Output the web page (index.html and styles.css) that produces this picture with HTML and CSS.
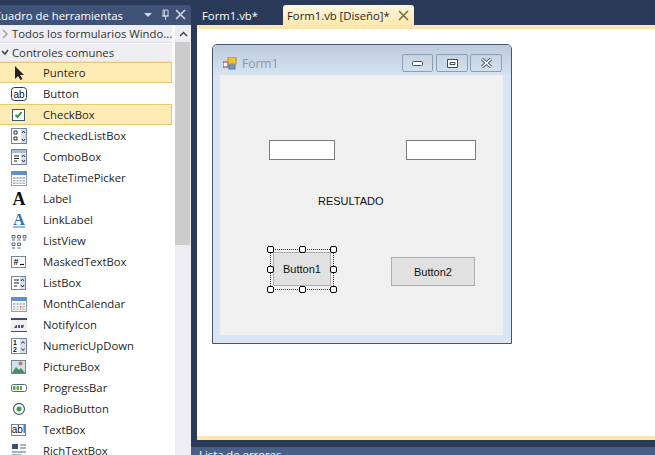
FILE: index.html
```html
<!DOCTYPE html>
<html lang="es">
<head>
<meta charset="utf-8">
<title>Form1.vb [Diseño]</title>
<link rel="stylesheet" href="styles.css">
</head>
<body>
<div class="app">
  <aside class="toolbox">
    <header class="panel-title">
      <span class="panel-name">Cuadro de herramientas</span>
      <span class="panel-tools">
        <svg width="42" height="14" viewBox="0 0 42 14"><path d="M0 5h8l-4 4z" fill="#cfd6e2"/><path d="M19 2h5v6h-5zM18 8h7M21.500 8v4M20.500 2v6" fill="none" stroke="#cfd6e2"/><path d="M32 2l9 9M41 2l-9 9" stroke="#cfd6e2" stroke-width="1.600"/></svg>
      </span>
    </header>
    <div class="panel-body">
      <div class="list">
        <div class="group group-first"><svg class="chev" width="8" height="10" viewBox="0 0 8 10"><path d="M2 1l4 4-4 4" fill="none" stroke="#a5a5a5" stroke-width="1.600"/></svg><span>Todos los formularios Windo...</span></div>
        <div class="group"><svg class="chev" width="8" height="10" viewBox="0 0 8 10"><path d="M1 3l3 3 3-4" fill="none" stroke="#444" stroke-width="1.600"/></svg><span>Controles comunes</span></div>

        <div class="item sel"><svg width="16" height="16" viewBox="0 0 16 16"><path d="M4 1v13l3-3 2.500 4 2-1-2.500-4h4z" fill="#222"/></svg><span>Puntero</span></div>
        <div class="item"><svg width="16" height="16" viewBox="0 0 16 16"><rect x=".5" y="1.500" width="15" height="13" rx="3" fill="#fff" stroke="#1f3a63"/><text x="8" y="11.500" class="ico-t" text-anchor="middle">ab</text></svg><span>Button</span></div>
        <div class="item sel"><svg width="16" height="16" viewBox="0 0 16 16"><rect x="1.500" y="2.500" width="12" height="11" fill="#fff" stroke="#44546a"/><path d="M4.500 8l2 2 4-5" fill="none" stroke="#2f9b3a" stroke-width="2"/></svg><span>CheckBox</span></div>
        <div class="item"><svg width="16" height="16" viewBox="0 0 16 16"><rect x=".5" y=".5" width="15" height="15" fill="#fff" stroke="#6f86a8"/><path d="M3 3h3v3H3zM3 9h3v3H3z" fill="none" stroke="#333"/><rect x="10" y="1" width="5" height="14" fill="#d5deea"/><path d="M11 5l1.500-2L14 5M11 11l1.500 2 1.500-2" fill="none" stroke="#333"/></svg><span>CheckedListBox</span></div>
        <div class="item"><svg width="16" height="16" viewBox="0 0 16 16"><rect x=".5" y=".5" width="15" height="15" fill="#fff" stroke="#6f86a8"/><rect x="1" y="1" width="14" height="3" fill="#a9bcd6"/><path d="M3 7h5M3 9.500h5M3 12h3" stroke="#222"/><rect x="10" y="5" width="5" height="10" fill="#d5deea"/><path d="M11 8l1.500-2L14 8M11 11l1.500 2 1.500-2" fill="none" stroke="#333"/></svg><span>ComboBox</span></div>
        <div class="item"><svg width="16" height="16" viewBox="0 0 16 16"><rect x=".5" y="1.500" width="15" height="14" fill="#fff" stroke="#8ea0b8"/><rect x="0" y="1" width="16" height="4" fill="#5f8fd0"/><path d="M2 7h12v7H2z" fill="#a7b0bd"/><path d="M5 7v7M8 7v7M11 7v7M2 9.500h12M2 12h12" stroke="#fff"/></svg><span>DateTimePicker</span></div>
        <div class="item"><svg width="16" height="16" viewBox="0 0 16 16"><text x="8" y="14" class="ico-a" text-anchor="middle">A</text></svg><span>Label</span></div>
        <div class="item"><svg width="16" height="16" viewBox="0 0 16 16"><text x="8" y="13" class="ico-a ico-link" text-anchor="middle">A</text><path d="M2 15h12" stroke="#2f72b8"/></svg><span>LinkLabel</span></div>
        <div class="item"><svg width="16" height="16" viewBox="0 0 16 16"><path d="M1 2.500h3v2.500H1zM6.500 2.500h3v2.500h-3zM12 2.500h3v2.500h-3zM1 10h3v2.500H1zM6.500 10h3v2.500h-3z" fill="none" stroke="#55687f"/><path d="M1 7h3M6.500 7h3M12 7h3M1 15h3M6.500 15h3" stroke="#55687f"/></svg><span>ListView</span></div>
        <div class="item"><svg width="16" height="16" viewBox="0 0 16 16"><rect x=".5" y="2.500" width="14" height="11" fill="#fff" stroke="#6f86a8"/><text x="2.500" y="10.500" class="ico-m">#</text><path d="M9 10.500h4" stroke="#111" stroke-width="1.200"/></svg><span>MaskedTextBox</span></div>
        <div class="item"><svg width="16" height="16" viewBox="0 0 16 16"><rect x=".5" y="1.500" width="14" height="13" fill="#fff" stroke="#6f86a8"/><path d="M3 5h5M3 8h5M3 11h3" stroke="#222"/><rect x="9" y="2" width="5" height="12" fill="#d5deea"/><path d="M10 6l1.500-2L13 6M10 10l1.500 2 1.500-2" fill="none" stroke="#333"/></svg><span>ListBox</span></div>
        <div class="item"><svg width="16" height="16" viewBox="0 0 16 16"><rect x=".5" y="1.500" width="15" height="14" fill="#fff" stroke="#8ea0b8"/><rect x="0" y="1" width="16" height="4" fill="#5f8fd0"/><path d="M2 7h12v7H2z" fill="#b5bdc9"/><rect x="9" y="10" width="3" height="3" fill="#d2603f"/><path d="M5 7v7M8 7v7M11 7v7M2 9.500h12M2 12h12" stroke="#fff"/></svg><span>MonthCalendar</span></div>
        <div class="item"><svg width="16" height="16" viewBox="0 0 16 16"><rect y="1" width="16" height="14" fill="#f1f1f1"/><path d="M0 1h16v2H0zM0 14h16v1H0z" fill="#3e5273"/><path d="M3 11l2-3h1v3zM7 8h2v3H7zM10 8h3l-1 3h-2z" fill="#3e5273"/></svg><span>NotifyIcon</span></div>
        <div class="item"><svg width="16" height="16" viewBox="0 0 16 16"><rect x=".5" y=".5" width="15" height="15" fill="#fff" stroke="#6f86a8"/><text x="2" y="7" class="ico-n">1</text><text x="2" y="14" class="ico-n">2</text><rect x="9" y="1" width="6" height="14" fill="#d5deea"/><path d="M10.500 5.500l1.500-2 1.500 2M10.500 10.500l1.500 2 1.500-2" fill="none" stroke="#333"/></svg><span>NumericUpDown</span></div>
        <div class="item"><svg width="16" height="16" viewBox="0 0 16 16"><rect x=".5" y="1.500" width="14" height="13" fill="#cfe0ef" stroke="#6f86a8"/><path d="M1 14l4-6 3 3 2-2 4 5z" fill="#4e8a62"/><circle cx="9.500" cy="4.500" r="2" fill="#d9704a"/></svg><span>PictureBox</span></div>
        <div class="item"><svg width="16" height="16" viewBox="0 0 16 16"><rect x=".5" y="4.500" width="15" height="7" rx="2" fill="#fff" stroke="#55687f"/><path d="M2 6h2.500v4H2zM5.500 6H8v4H5.500zM9 6h2v4H9z" fill="#58ae4a"/></svg><span>ProgressBar</span></div>
        <div class="item"><svg width="16" height="16" viewBox="0 0 16 16"><circle cx="8" cy="8" r="5.500" fill="#fff" stroke="#55687f" stroke-width="1.300"/><circle cx="8" cy="8" r="2.500" fill="#3f9c46"/></svg><span>RadioButton</span></div>
        <div class="item"><svg width="16" height="16" viewBox="0 0 16 16"><rect x=".5" y="2.500" width="14" height="11" fill="#fff" stroke="#6f86a8"/><text x="7.500" y="11" class="ico-t" text-anchor="middle">abl</text></svg><span>TextBox</span></div>
        <div class="item"><svg width="16" height="16" viewBox="0 0 16 16"><path d="M1 1h6v5H1z" fill="#36507c"/><path d="M9 2h6M9 5h6M1 9h14M1 12h9" stroke="#55687f"/><path d="M11 15l4-3v3z" fill="#36507c"/></svg><span>RichTextBox</span></div>
      </div>
      <div class="scrollbar">
        <div class="scroll-up"><svg width="9" height="6" viewBox="0 0 9 6"><path d="M1 5l3.500-3.500L8 5" fill="none" stroke="#444" stroke-width="1.500"/></svg></div>
        <div class="scroll-thumb"></div>
      </div>
    </div>
  </aside>

  <main class="workspace">
    <nav class="tabs">
      <div class="tab">Form1.vb*</div>
      <div class="tab active"><span>Form1.vb [Diseño]*</span>
        <svg width="11" height="11" viewBox="0 0 11 11"><path d="M1 1l9 9M10 1l-9 9" stroke="#7d6a3a" stroke-width="1.500"/></svg>
      </div>
    </nav>
    <div class="strip"></div>
    <section class="designer">
      <div class="form">
        <div class="form-title">
          <svg width="14" height="13" viewBox="0 0 14 13"><rect x="0" y="5" width="5" height="5" fill="#fff" stroke="#b5252a"/><rect x="5" y="0" width="8" height="7" fill="#f2c22e" stroke="#b98e18"/><rect x="6" y="8" width="6" height="4" fill="#6f9fd0" stroke="#4a76a8"/></svg>
          <span class="form-name">Form1</span>
          <div class="win-btns">
            <div class="win-btn"><svg width="11" height="7" viewBox="0 0 11 7"><rect x=".5" y="1.500" width="10" height="4" rx="1" fill="#fff" stroke="#3f4d60"/></svg></div>
            <div class="win-btn"><svg width="11" height="9" viewBox="0 0 11 9"><path d="M.5.5h10v8H.5zM3 3.500h5v2H3z" fill="#fff" stroke="#3f4d60"/></svg></div>
            <div class="win-btn"><svg width="13" height="10" viewBox="0 0 13 10"><path d="M2 1l9 8M11 1L2 9" stroke="#3f4d60" stroke-width="3.200"/><path d="M2 1l9 8M11 1L2 9" stroke="#fff" stroke-width="1.600"/></svg></div>
          </div>
        </div>
        <div class="client">
          <div class="textbox tb1"></div>
          <div class="textbox tb2"></div>
          <div class="label">RESULTADO</div>
          <div class="button b1">Button1</div>
          <div class="button b2">Button2</div>
          <div class="selection">
            <i class="h h-tl"></i><i class="h h-tc"></i><i class="h h-tr"></i>
            <i class="h h-ml"></i><i class="h h-mr"></i>
            <i class="h h-bl"></i><i class="h h-bc"></i><i class="h h-br"></i>
          </div>
        </div>
      </div>
    </section>
    <div class="strip strip-bottom"></div>
    <footer class="errors">Lista de errores</footer>
  </main>
</div>
</body>
</html>
```
FILE: styles.css
```css
* { box-sizing: border-box; }
html, body { margin: 0; height: 100%; overflow: hidden; }
body { background: #2a3b5a; font-family: "Open Sans", "Noto Sans", sans-serif; font-size: 11.3px; color: #1e1e1e; }
.app { display: flex; width: 655px; height: 455px; padding-top: 5px; overflow: hidden; }

.toolbox { width: 191px; flex: none; display: flex; flex-direction: column; }
.panel-title { height: 20px; flex: none; display: flex; justify-content: space-between; align-items: center; background: #3f5379; color: #fff; border-radius: 0 3px 0 0; padding-right: 5px; }
.panel-name { margin-left: -6px; white-space: nowrap; }
.panel-tools { display: flex; }
.panel-body { display: flex; flex: 1; min-height: 0; background: #fff; }
.list { width: 175px; flex: none; padding-right: 3px; }
.group { height: 18px; display: flex; align-items: center; gap: 3px; padding-left: 1px; background: #eeeef4; border-bottom: 1px solid #e2e2e8; white-space: nowrap; color: #333; }
.group-first { margin-bottom: 1px; }
.group .chev { flex: none; }
.item { height: 21px; display: flex; align-items: center; padding-left: 11px; gap: 16px; white-space: nowrap; border: 1px solid transparent; border-left: 0; }
.item svg { flex: none; }
.item.sel { background: #ffecb5; border-color: #e6c873; }
.ico-t { font: 10px "Liberation Sans", sans-serif; fill: #111; }
.ico-a { font: bold 18px "Liberation Serif", serif; fill: #111; }
.ico-link { fill: #2f72b8; font-size: 16px; }
.ico-m { font: bold 9px "Liberation Sans", sans-serif; fill: #111; }
.ico-n { font: bold 7px "Liberation Sans", sans-serif; fill: #111; }
.scrollbar { width: 16px; flex: none; background: #eeeef2; }
.scroll-up { height: 17px; display: flex; align-items: center; justify-content: center; }
.scroll-thumb { height: 203px; width: 15px; background: #cccccc; }

.workspace { flex: 1; min-width: 0; display: flex; flex-direction: column; padding-left: 6px; background: #2a3b5a; }
.tabs { height: 20px; flex: none; display: flex; align-items: stretch; }
.tab { display: flex; align-items: center; width: 86px; padding-left: 5px; color: #fff; }
.tab.active { width: 131px; padding: 0 5px 0 4px; justify-content: space-between; color: #1e1e1e; background: linear-gradient(#fff6e0, #ffe9af); border-radius: 3px 3px 0 0; white-space: nowrap; }
.tab.active svg { flex: none; }
.strip { height: 4px; flex: none; background: #fde6ae; }
.designer { height: 407px; flex: none; background: #fff; padding: 15px; overflow: hidden; }
.strip-bottom { height: 4px; }
.errors { margin: 7px 0 0 -6px; flex: 1; background: #4a5f86; color: #fff; padding: 0 0 0 8px; line-height: 15px; white-space: nowrap; overflow: hidden; }

.form { width: 300px; height: 300px; border: 1px solid #47566c; border-radius: 5px 5px 0 0; background: #d9e5f2; display: flex; flex-direction: column; padding: 0 8px 8px 7px; }
.form-title { height: 30px; flex: none; margin: 0 -8px 0 -7px; padding: 12px 9px 0 10px; display: flex; align-items: flex-start; background: linear-gradient(#bccadb, #d6e3f1); border-radius: 4px 4px 0 0; }
.form-name { margin-left: 5px; color: #8b97a6; font-size: 12px; line-height: 13px; }
.win-btns { margin: -3px 0 0 auto; display: flex; gap: 2px; }
.win-btn { width: 32px; height: 18px; display: flex; align-items: center; justify-content: center; border: 1px solid #8d9db3; border-radius: 2px; background: linear-gradient(#c6d3e2, #d3dfec); }
.win-btn:first-child { margin-right: 1px; width: 31px; }
.client { flex: 1; position: relative; background: #f0f0f0; font: 11px "Liberation Sans", Arial, sans-serif; color: #111; }
.textbox { position: absolute; top: 65px; height: 20px; background: #fff; border: 1px solid #7a7a7a; }
.tb1 { left: 49px; width: 66px; }
.tb2 { left: 186px; width: 70px; }
.label { position: absolute; left: 98px; top: 120px; line-height: 13px; }
.button { position: absolute; display: flex; align-items: center; justify-content: center; background: #e1e1e1; border: 1px solid #adadad; }
.b1 { left: 53px; top: 177px; width: 58px; height: 34px; }
.b2 { left: 171px; top: 182px; width: 84px; height: 29px; }
.selection { position: absolute; left: 50px; top: 174px; width: 64px; height: 41px; border: 1px dotted #333; }
.h { position: absolute; width: 7px; height: 7px; background: #fff; border: 1px solid #000; border-radius: 2px; }
.h-tl, .h-ml, .h-bl { left: -4px; }
.h-tc, .h-bc { left: 28px; }
.h-tr, .h-mr, .h-br { right: -4px; }
.h-tl, .h-tc, .h-tr { top: -4px; }
.h-ml, .h-mr { top: 16px; }
.h-bl, .h-bc, .h-br { bottom: -4px; }
```
